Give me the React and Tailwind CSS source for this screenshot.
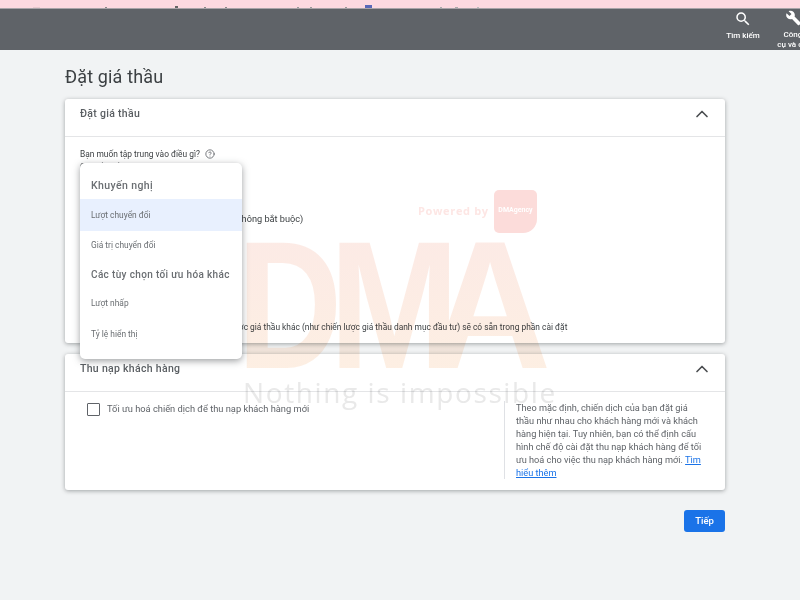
import { ChevronUp, CircleHelp } from "lucide-react";
import { MdSearch, MdBuild } from "react-icons/md";

const FONT = { fontFamily: "Roboto, sans-serif" };

// descenders of the cropped text line above the dark bar
const SPECKS = [
  [33, 7, 1, "#e9c9cf"], [105, 2, 1, "#888"], [175, 3, 2, "#666"], [204, 2, 1, "#888"],
  [225, 2, 1, "#888"], [297, 2, 1, "#999"], [310, 2, 1, "#999"], [345, 2, 1, "#999"],
  [365, 7, 3, "#5a69b8"], [440, 2, 1, "#aaa"], [455, 3, 1, "#aaa"], [477, 2, 1, "#bbb"],
];

const BIG_LETTER = "absolute top-[205px] origin-left text-[182px] leading-[200px] font-bold text-transparent bg-clip-text bg-gradient-to-b from-[#fce9e6] to-[#fdf0e2]";

function Card({ title, className, children }) {
  return (
    <section className={`relative bg-white rounded-[3px] shadow-[0_1px_4px_rgba(60,64,67,0.45)] ${className}`}>
      <div className="h-[38px] pb-[8px] px-[15px] flex items-center justify-between border-b border-[#e4e5e7]">
        <h2 className="text-[10.5px] font-medium text-[#5a5e62] tracking-[0.3px]">{title}</h2>
        <ChevronUp size={20} strokeWidth={2} className="text-[#4a4d50] mr-[-2px]" />
      </div>
      {children}
    </section>
  );
}

function BidDropdown() {
  return (
    <div className="absolute z-20 left-[15px] top-[64px] w-[162px] h-[196px] bg-white rounded-[5px] shadow-[0_2px_7px_rgba(60,64,67,0.5)] text-[#6a6e72]">
      <div className="h-[36px] pl-[11px] pt-[16px] text-[10.5px] font-medium leading-[14px] tracking-[0.4px]">Khuyến nghị</div>
      <div className="h-[32px] pl-[11px] bg-[#e8f0fe] flex items-center text-[8.4px]">Lượt chuyển đổi</div>
      <div className="h-[29px] pl-[11px] flex items-center text-[8.4px]">Giá trị chuyển đổi</div>
      <div className="h-[28px] pl-[11px] flex items-center text-[10px] font-medium tracking-[0.35px] whitespace-nowrap">Các tùy chọn tối ưu hóa khác</div>
      <div className="h-[30px] pl-[11px] flex items-center text-[8.4px]">Lượt nhấp</div>
      <div className="h-[32px] pl-[11px] flex items-center text-[8.4px]">Tỷ lệ hiển thị</div>
    </div>
  );
}

function Watermark() {
  const bigFont = { fontFamily: "Liberation Sans, sans-serif" };
  return (
    <div className="absolute inset-0 z-10 mix-blend-multiply pointer-events-none overflow-hidden">
      <div className="absolute left-[418px] top-[203px] text-[11px] font-bold tracking-[0.65px] text-[#fde6e4] whitespace-nowrap" style={{ fontFamily: "Open Sans, sans-serif" }}>
        Powered by
      </div>
      <div className="absolute left-[494px] top-[190px] w-[43px] h-[43px] rounded-[5px] rounded-br-[14px] bg-[#fcdcda] flex items-start justify-center pt-[15px] text-[7px] font-bold text-white">
        DMAgency
      </div>
      <div className={`${BIG_LETTER} left-[237px] scale-x-[0.8]`} style={bigFont}>D</div>
      <div className={`${BIG_LETTER} left-[329px] scale-x-[0.86]`} style={bigFont}>M</div>
      <div className={`${BIG_LETTER} left-[429px] scale-x-[0.93]`} style={bigFont}>A</div>
      <div className="absolute left-[243px] top-[373px] text-[28px] leading-[38px] tracking-[1.6px] text-[#e9e9e9] whitespace-nowrap" style={{ fontFamily: "Open Sans, sans-serif" }}>
        Nothing is impossible
      </div>
    </div>
  );
}

export default function App() {
  return (
    <div className="relative w-[800px] h-[600px] overflow-hidden bg-[#f1f3f4] flex flex-col" style={FONT}>
      <svg width="800" height="8" className="block bg-[#fdd9e0] shrink-0">
        {SPECKS.map(([x, w, h, c], i) => (
          <rect key={i} x={x} y={8 - h} width={w} height={h} fill={c} />
        ))}
      </svg>
      <header className="h-[42px] shrink-0 bg-[#5f6368] border-t border-[#a9a4a8] flex justify-end text-white text-[8px] font-medium leading-[10px] text-center">
        <div className="w-[50px] pt-[1px] flex flex-col items-center">
          <MdSearch size={18} />
          <span className="mt-[3px] whitespace-nowrap">Tìm kiếm</span>
        </div>
        <div className="w-[50px] pt-[1px] mr-[-18px] flex flex-col items-center">
          <MdBuild size={17} />
          <span className="mt-[4px] whitespace-nowrap">
            Công
            <br />
            cụ và cài
          </span>
        </div>
      </header>

      <main className="flex-1 pl-[65px] pr-[75px] pt-[15px] text-[#3c4043]">
        <h1 className="text-[18px] leading-[24px] text-[#3c4043] tracking-[0.15px]">Đặt giá thầu</h1>
        <Card title="Đặt giá thầu" className="mt-[10px] h-[244px]">
          <div className="pl-[15px] pt-[11px] text-[8.4px] text-[#3c4043] leading-[12px]">
            <div className="flex items-center gap-[5px]">
              <span>Bạn muốn tập trung vào điều gì?</span>
              <CircleHelp size={10} className="text-[#5f6368]" />
            </div>
            <div className="mt-[1px]">Chuyển đổi</div>
            <div className="mt-[40px] pl-[7px] text-[9.2px]">Đặt chi phí mục tiêu mỗi hành động (không bắt buộc)</div>
            <div className="mt-[96px] pl-[113px] whitespace-nowrap">
              Các chiến lược giá thầu khác (như chiến lược giá thầu danh mục đầu tư) sẽ có sẵn trong phần cài đặt
            </div>
          </div>
          <BidDropdown />
        </Card>

        <Card title="Thu nạp khách hàng" className="mt-[11px] h-[136px]">
          <div className="flex">
            <label className="flex-1 pl-[22px] pt-[10px] flex items-start gap-[7px] text-[9.3px] leading-[14px] text-[#5f6368]">
              <span className="w-[13px] h-[13px] mt-[1px] border-[1.5px] border-[#5f6368] rounded-[1px] shrink-0" />
              Tối ưu hoá chiến dịch để thu nạp khách hàng mới
            </label>
            <div className="w-[221px] h-[78px] mt-[9px] border-l border-[#dfe1e5] pl-[11px] pr-[18px] text-[9.2px] leading-[13px] text-[#5f6368]">
              Theo mặc định, chiến dịch của bạn đặt giá thầu như nhau cho khách hàng mới và khách hàng hiện tại. Tuy nhiên, bạn có thể định cấu hình chế độ cài đặt thu nạp khách hàng để tối ưu hoá cho việc thu nạp khách hàng mới.{" "}
              <a className="text-[#1a73e8] underline">Tìm hiểu thêm</a>
            </div>
          </div>
        </Card>

        <div className="mt-[20px] flex justify-end">
          <button className="w-[41px] h-[22px] rounded-[3px] bg-[#1a73e8] text-white text-[9.5px] font-medium">Tiếp</button>
        </div>
      </main>
      <Watermark />
    </div>
  );
}
